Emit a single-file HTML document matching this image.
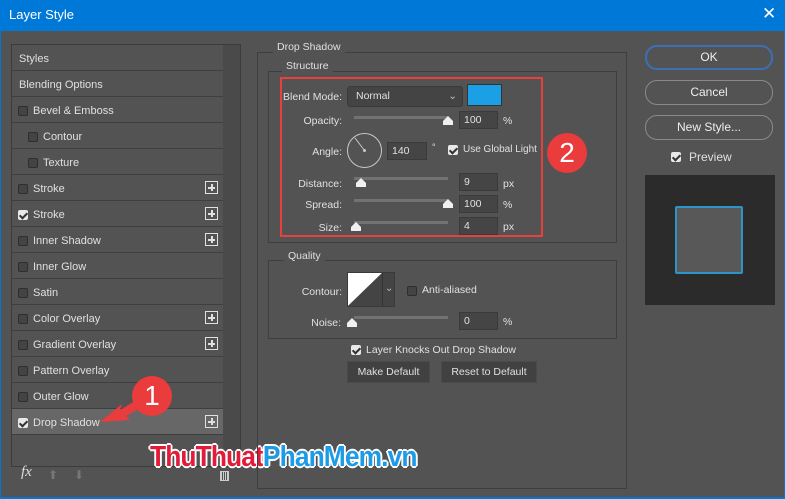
<!DOCTYPE html>
<html><head><meta charset="utf-8"><style>
*{margin:0;padding:0;box-sizing:border-box}
body{width:785px;height:499px;background:#535353;font-family:"Liberation Sans",sans-serif;font-size:11px;color:#e0e0e0;position:relative;overflow:hidden}
.a{position:absolute}
.row{position:absolute;left:12px;width:211px;height:26px;border-bottom:1px solid #3f3f3f;line-height:28px}
.cb{position:absolute;width:10px;height:10px;border:1px solid #2e2e2e;background:#444;border-radius:2px;top:9px}
.cb.on{background:#e8e8e8;border-color:#e8e8e8}
.cb.on::after{content:"";position:absolute;left:2px;top:0px;width:3px;height:6px;border:solid #333;border-width:0 2px 2px 0;transform:rotate(45deg)}
.plus{position:absolute;left:193px;top:6px;width:13px;height:13px;border:1px solid #e0e0e0}
.plus::before{content:"";position:absolute;left:2px;top:5px;width:7px;height:1.5px;background:#e0e0e0}
.plus::after{content:"";position:absolute;left:5px;top:2px;width:1.5px;height:7px;background:#e0e0e0}
.lbl{position:absolute;text-align:right;width:90px;font-size:10.5px}
.inp{position:absolute;left:459px;width:39px;height:18px;background:#454545;border:1px solid #3a3a3a;padding-left:4px;line-height:16px;font-size:10.5px}
.trk{position:absolute;left:354px;width:94px;height:3px;background:#727272}
.th{position:absolute;width:10px;height:9px;background:#f0f0f0;clip-path:polygon(50% 0,100% 55%,100% 100%,0 100%,0 55%)}
.unit{position:absolute;left:503px;font-size:10.5px}
.btn{position:absolute;left:645px;width:128px;height:25px;border:1px solid #8a8a8a;border-radius:12px;text-align:center;line-height:23px;font-size:12px;color:#eee}
.fs{position:absolute;border:1px solid #3e3e3e}
.leg{position:absolute;background:#535353;padding:0 4px;font-size:10.5px}
.pb{position:absolute;height:22px;background:#414141;border:1px solid #4a4a4a;text-align:center;line-height:20px;font-size:10.5px}
</style></head><body>
<div class="a" style="left:0;top:0;width:785px;height:31px;background:#0078d7"></div>
<div class="a" style="left:9px;top:7px;font-size:13px;color:#fff">Layer Style</div>
<div class="a" style="left:762px;top:4px;font-size:17px;color:#fff">✕</div>
<div class="a" style="left:0;top:31px;width:1px;height:468px;background:#0078d7"></div>
<div class="a" style="left:784px;top:31px;width:1px;height:468px;background:#0078d7"></div>
<div class="a" style="left:0;top:497px;width:785px;height:2px;background:#0078d7"></div>

<!-- left panel -->
<div class="a" style="left:11px;top:44px;width:230px;height:423px;border:1px solid #3c3c3c"></div>
<div class="a" style="left:223px;top:45px;width:17px;height:421px;background:#4a4a4a"></div>
<div class="row" style="top:45px"><span class="a" style="left:7px">Styles</span></div>
<div class="row" style="top:71px"><span class="a" style="left:7px">Blending Options</span></div>
<div class="row" style="top:97px"><div class="cb" style="left:6px"></div><span class="a" style="left:21px">Bevel &amp; Emboss</span></div>
<div class="row" style="top:123px"><div class="cb" style="left:16px"></div><span class="a" style="left:31px">Contour</span></div>
<div class="row" style="top:149px"><div class="cb" style="left:16px"></div><span class="a" style="left:31px">Texture</span></div>
<div class="row" style="top:175px"><div class="cb" style="left:6px"></div><span class="a" style="left:21px">Stroke</span><div class="plus"></div></div>
<div class="row" style="top:201px"><div class="cb on" style="left:6px"></div><span class="a" style="left:21px">Stroke</span><div class="plus"></div></div>
<div class="row" style="top:227px"><div class="cb" style="left:6px"></div><span class="a" style="left:21px">Inner Shadow</span><div class="plus"></div></div>
<div class="row" style="top:253px"><div class="cb" style="left:6px"></div><span class="a" style="left:21px">Inner Glow</span></div>
<div class="row" style="top:279px"><div class="cb" style="left:6px"></div><span class="a" style="left:21px">Satin</span></div>
<div class="row" style="top:305px"><div class="cb" style="left:6px"></div><span class="a" style="left:21px">Color Overlay</span><div class="plus"></div></div>
<div class="row" style="top:331px"><div class="cb" style="left:6px"></div><span class="a" style="left:21px">Gradient Overlay</span><div class="plus"></div></div>
<div class="row" style="top:357px"><div class="cb" style="left:6px"></div><span class="a" style="left:21px">Pattern Overlay</span></div>
<div class="row" style="top:383px"><div class="cb" style="left:6px"></div><span class="a" style="left:21px">Outer Glow</span></div>
<div class="row" style="top:409px;background:#676767"><div class="cb on" style="left:6px"></div><span class="a" style="left:21px">Drop Shadow</span><div class="plus"></div></div>
<div class="a" style="left:21px;top:464px;font-style:italic;font-family:'Liberation Serif',serif;font-size:15px;color:#ddd">fx</div>
<div class="a" style="left:48px;top:468px;color:#777;font-size:12px">⬆</div>
<div class="a" style="left:74px;top:468px;color:#777;font-size:12px">⬇</div>
<div class="a" style="left:220px;top:471px;width:9px;height:10px;border:1px solid #ccc;background:repeating-linear-gradient(90deg,#ccc 0 1px,transparent 1px 2px)"></div>

<!-- watermark -->
<div class="a" style="left:150px;top:441px;font-size:29px;font-weight:bold;letter-spacing:-1px;text-shadow:2px 0 #fff,-2px 0 #fff,0 2px #fff,0 -2px #fff,1px 1px #fff,-1px -1px #fff,1px -1px #fff,-1px 1px #fff;transform:scaleX(.91);transform-origin:left"><span style="color:#e31b3a">ThuThuat</span><span style="color:#1e9be6">PhanMem.vn</span></div>

<!-- right group -->
<div class="fs" style="left:257px;top:52px;width:370px;height:437px"></div>
<div class="leg" style="left:273px;top:41px">Drop Shadow</div>
<div class="fs" style="left:268px;top:71px;width:349px;height:172px"></div>
<div class="leg" style="left:282px;top:60px">Structure</div>
<div class="lbl" style="left:252px;top:91px">Blend Mode:</div>
<div class="a" style="left:347px;top:86px;width:116px;height:21px;background:#444;border:1px solid #3a3a3a;border-radius:3px;padding-left:8px;line-height:19px;font-size:10.5px">Normal<span class="a" style="right:5px;top:0;color:#bbb">⌄</span></div>
<div class="a" style="left:467px;top:84px;width:35px;height:22px;background:#1ba0e6;border:1px solid #333"></div>
<div class="lbl" style="left:252px;top:115px">Opacity:</div>
<div class="trk" style="top:116px"></div><div class="th" style="left:443px;top:116px"></div>
<div class="inp" style="top:111px">100</div><div class="unit" style="top:115px">%</div>
<div class="lbl" style="left:252px;top:146px">Angle:</div>
<div class="a" style="left:347px;top:133px;width:35px;height:35px;border:1px solid #c8c8c8;border-radius:50%"></div>
<svg class="a" style="left:347px;top:133px" width="35" height="35"><line x1="8" y1="5" x2="17.5" y2="17.5" stroke="#c8c8c8" stroke-width="1"/><circle cx="17.5" cy="17.5" r="1.5" fill="#c8c8c8"/></svg>
<div class="inp" style="left:387px;top:142px;width:40px">140</div>
<div class="a" style="left:432px;top:142px;font-size:9px">°</div>
<div class="cb on" style="left:448px;top:145px"></div>
<div class="a" style="left:463px;top:144px;font-size:10px">Use Global Light</div>
<div class="lbl" style="left:252px;top:178px">Distance:</div>
<div class="trk" style="top:177px"></div><div class="th" style="left:356px;top:178px"></div>
<div class="inp" style="top:173px">9</div><div class="unit" style="top:178px">px</div>
<div class="lbl" style="left:252px;top:199px">Spread:</div>
<div class="trk" style="top:199px"></div><div class="th" style="left:443px;top:199px"></div>
<div class="inp" style="top:195px">100</div><div class="unit" style="top:199px">%</div>
<div class="lbl" style="left:252px;top:222px">Size:</div>
<div class="trk" style="top:221px"></div><div class="th" style="left:351px;top:222px"></div>
<div class="inp" style="top:217px">4</div><div class="unit" style="top:221px">px</div>
<div class="a" style="left:280px;top:77px;width:263px;height:160px;border:2px solid #e8403f"></div>
<div class="a" style="left:547px;top:133px;width:40px;height:40px;border-radius:50%;background:#ea3b3d;color:#fff;font-size:28px;text-align:center;line-height:40px">2</div>

<div class="fs" style="left:268px;top:260px;width:349px;height:79px"></div>
<div class="leg" style="left:284px;top:250px">Quality</div>
<div class="lbl" style="left:252px;top:286px">Contour:</div>
<div class="a" style="left:347px;top:272px;width:48px;height:35px;border:1px solid #3a3a3a;background:#444"></div>
<svg class="a" style="left:348px;top:273px" width="34" height="33"><polygon points="0,0 34,0 0,33" fill="#fff"/><polygon points="34,0 34,33 0,33" fill="#444"/></svg>
<div class="a" style="left:382px;top:273px;width:1px;height:33px;background:#333"></div>
<div class="a" style="left:385px;top:283px;color:#bbb;font-size:10px">⌄</div>
<div class="cb" style="left:407px;top:286px"></div>
<div class="a" style="left:422px;top:284px;font-size:10.5px">Anti-aliased</div>
<div class="lbl" style="left:251px;top:317px">Noise:</div>
<div class="trk" style="top:316px"></div><div class="th" style="left:347px;top:318px"></div>
<div class="inp" style="top:312px">0</div><div class="unit" style="top:316px">%</div>
<div class="cb on" style="left:351px;top:345px"></div>
<div class="a" style="left:366px;top:344px;font-size:10.5px">Layer Knocks Out Drop Shadow</div>
<div class="pb" style="left:347px;top:361px;width:83px">Make Default</div>
<div class="pb" style="left:441px;top:361px;width:96px">Reset to Default</div>

<!-- arrow + 1 -->
<svg class="a" style="left:90px;top:370px" width="90" height="70"><polygon points="10,52 32,34 30,40 60,22 65,30 36,46 40,50" fill="#ea3b3d"/></svg>
<div class="a" style="left:132px;top:376px;width:40px;height:40px;border-radius:50%;background:#ea3b3d;color:#fff;font-size:28px;text-align:center;line-height:40px">1</div>

<!-- right buttons -->
<div class="btn" style="top:45px;border-color:#3d6fb6;border-width:2px;line-height:21px">OK</div>
<div class="btn" style="top:80px">Cancel</div>
<div class="btn" style="top:115px">New Style...</div>
<div class="cb on" style="left:671px;top:152px"></div>
<div class="a" style="left:689px;top:150px;font-size:12px">Preview</div>
<div class="a" style="left:645px;top:175px;width:130px;height:130px;background:#2b2b2b"></div>
<div class="a" style="left:675px;top:206px;width:68px;height:68px;background:#585858;border:2px solid #2b95c9;border-radius:2px"></div>
</body></html>
